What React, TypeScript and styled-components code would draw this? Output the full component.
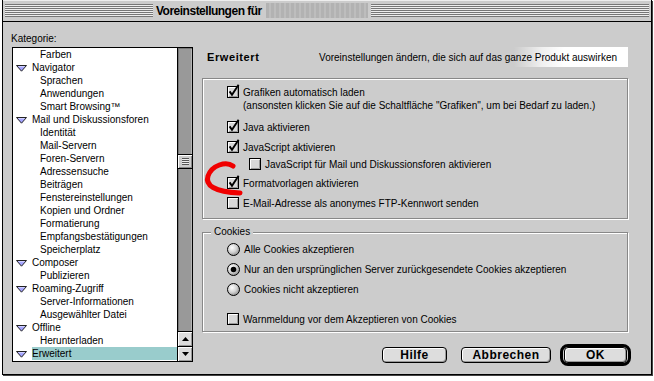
import React, { useId } from "react";
import styled, { createGlobalStyle } from "styled-components";

const GlobalStyle = createGlobalStyle`
  html, body { margin: 0; padding: 0; }
  body {
    width: 654px;
    height: 381px;
    overflow: hidden;
    background: #ffffff;
    font-family: "Liberation Sans", Arial, sans-serif;
    font-size: 10px;
    color: #000;
  }
  * { box-sizing: border-box; }
`;

const Screen = styled.div`
  padding-left: 2px;
  height: 381px;
`;

const Window = styled.div`
  width: 650px;
  height: 375px;
  background: #cccccc;
  border: 1px solid #000;
  border-top: none;
  box-shadow: 1px 1px 0 #444;
  display: flex;
  flex-direction: column;
`;

const TitleBar = styled.div`
  height: 22px;
  border-bottom: 1px solid #000;
  display: flex;
  align-items: center;
  padding: 0 2px;
  background: #cccccc;
  box-shadow: inset 0 1px 0 #eeeeee;
`;

const Stripes = styled.div<{ $w?: number }>`
  height: 13px;
  ${(p) => (p.$w ? `width: ${p.$w}px;` : "flex: 1;")}
  background: repeating-linear-gradient(to bottom, #777777 0 1px, #eeeeee 1px 2px);
`;

const TitleText = styled.div`
  font-family: "Liberation Sans", Arial, sans-serif;
  font-weight: bold;
  font-size: 12px;
  letter-spacing: -0.5px;
  padding: 0 4px 0 3px;
  line-height: 14px;
`;

const Redacted = styled.div`
  width: 102px;
  height: 15px;
  margin-right: 3px;
  background: repeating-linear-gradient(90deg, #b2b2b2 0 3px, #bdbdbd 3px 5px);
`;

const Body = styled.div`
  flex: 1;
  display: flex;
  padding-left: 9px;
`;

const LeftCol = styled.div`
  width: 181px;
  display: flex;
  flex-direction: column;
  padding-top: 11px;
`;

const Label = styled.div`
  height: 12px;
  line-height: 12px;
  margin-left: -1px;
  margin-bottom: 2px;
`;

const ListBox = styled.div`
  width: 181px;
  height: 315px;
  border: 1px solid #000;
  background: #fff;
  display: flex;
`;

const Rows = styled.div`
  width: 164px;
  display: flex;
  flex-direction: column;
`;

const Row = styled.div<{ $child?: boolean }>`
  height: 13px;
  display: flex;
  align-items: center;
  padding-left: ${(p) => (p.$child ? 27 : 3)}px;
  gap: 5px;
`;

const RowLabel = styled.span<{ $selected?: boolean }>`
  flex: 1;
  height: 13px;
  line-height: 13px;
  white-space: nowrap;
  background: ${(p) => (p.$selected ? "#99cccc" : "transparent")};
`;

const TriSvg = styled.svg`
  flex-shrink: 0;
  margin-top: 2px;
`;

const ScrollBar = styled.div`
  width: 15px;
  border-left: 1px solid #000;
  display: flex;
  flex-direction: column;
`;

const Track = styled.div`
  flex: 1;
  background: #999999;
  box-shadow: inset 1px 1px 0 #777777, inset -1px 0 0 #b5b5b5;
`;

const Thumb = styled.div<{ $top: number }>`
  margin-top: ${(p) => p.$top}px;
  height: 15px;
  background: #cccccc;
  border-top: 1px solid #000;
  border-bottom: 1px solid #000;
  box-shadow: inset 1px 1px 0 #ffffff, inset -1px -1px 0 #888888;
  display: flex;
  align-items: center;
  justify-content: center;
`;

const Grip = styled.div`
  width: 7px;
  height: 7px;
  background: repeating-linear-gradient(to bottom, #555555 0 1px, #eeeeee 1px 2px);
`;

const Arrow = styled.div`
  height: 15px;
  border-top: 1px solid #000;
  background: #dddddd;
  box-shadow: inset 1px 1px 0 #ffffff, inset -1px -1px 0 #999999;
  display: flex;
  align-items: center;
  justify-content: center;
`;

const RightCol = styled.div`
  width: 426px;
  margin-left: 9px;
  display: flex;
  flex-direction: column;
  padding-top: 25px;
`;

const HeaderRow = styled.div`
  height: 20px;
  display: flex;
  align-items: center;
  justify-content: space-between;
  padding: 0 11px 0 5px;
  background: linear-gradient(90deg, rgba(255,255,255,0) 0 312px, rgba(255,255,255,0.7) 340px, #ffffff 362px);
`;

const HeaderTitle = styled.span`
  font-weight: bold;
  font-size: 11px;
  letter-spacing: 0.6px;
`;

const HeaderDesc = styled.span`
  white-space: nowrap;
`;

const Group = styled.div<{ $mt: number; $h: number; $pt: number }>`
  position: relative;
  margin-top: ${(p) => p.$mt}px;
  height: ${(p) => p.$h}px;
  border: 1px solid #888888;
  box-shadow: 1px 1px 0 #ffffff, inset 1px 1px 0 #ffffff;
  padding: ${(p) => p.$pt}px 0 0 24px;
  display: flex;
  flex-direction: column;
`;

const GroupLegend = styled.span`
  position: absolute;
  left: 8px;
  top: -8px;
  padding: 0 3px;
  background: #cccccc;
  line-height: 14px;
`;

const Option = styled.div<{ $mt?: number; $indent?: number }>`
  height: 14px;
  display: flex;
  align-items: center;
  gap: 4px;
  margin-top: ${(p) => p.$mt ?? 0}px;
  margin-left: ${(p) => p.$indent ?? 0}px;
  white-space: nowrap;
`;

const ContLine = styled.div`
  height: 14px;
  line-height: 14px;
  padding-left: 16px;
  white-space: nowrap;
`;

const CtlSvg = styled.svg`
  flex-shrink: 0;
  overflow: visible;
`;

const Annotation = styled.svg`
  position: absolute;
  left: -1px;
  top: -1px;
  overflow: visible;
  pointer-events: none;
`;

const ButtonRow = styled.div`
  margin-top: 12px;
  margin-right: -3px;
  display: flex;
  justify-content: flex-end;
  align-items: center;
  gap: 9px;
`;

const PushButton = styled.div<{ $w: number; $mr?: number }>`
  width: ${(p) => p.$w}px;
  height: 16px;
  margin-right: ${(p) => p.$mr ?? 0}px;
  border: 1px solid #000;
  border-radius: 4px;
  background: #dddddd;
  box-shadow: inset 1px 1px 0 #ffffff, inset -1px -1px 0 #999999;
  display: flex;
  align-items: center;
  justify-content: center;
  font-weight: bold;
  font-size: 12px;
  letter-spacing: 0.5px;
  line-height: 14px;
`;

const DefaultRing = styled.div`
  border: 3px solid #000;
  border-radius: 8px;
  padding: 0 1px;
  display: flex;
`;

const Triangle = () => (
  <TriSvg width="11" height="7" viewBox="0 0 11 7">
    <path d="M0.5 0.5 H10.5 L5.5 6.2 Z" fill="#a4a4ff" stroke="#222" strokeWidth="1" strokeLinejoin="round" />
    <path d="M2.5 1.6 H8.5" stroke="#d4d4ff" strokeWidth="1" />
  </TriSvg>
);

const CheckBox = ({ checked }: { checked?: boolean }) => (
  <CtlSvg width="12" height="12" viewBox="0 0 12 12">
    <rect x="0.5" y="0.5" width="11" height="11" fill="#d8d8d8" stroke="#000" />
    <path d="M1.5 10.5 V1.5 H10.5" stroke="#ffffff" fill="none" />
    <path d="M2 10.5 H10.5 V2" stroke="#999999" fill="none" />
    {checked && (
      <path d="M2.6 5.4 L5 8.8 L11.6 -1.2" stroke="#000" strokeWidth="1.9" fill="none" />
    )}
  </CtlSvg>
);

const Radio = ({ on }: { on?: boolean }) => {
  const id = useId();
  return (
    <CtlSvg width="13" height="13" viewBox="0 0 13 13">
      <defs>
        <radialGradient id={id} cx="0.38" cy="0.35" r="0.7">
          <stop offset="0" stopColor="#ffffff" />
          <stop offset="0.55" stopColor="#d2d2d2" />
          <stop offset="1" stopColor="#8a8a8a" />
        </radialGradient>
      </defs>
      <circle cx="6.5" cy="6.5" r="6" fill={`url(#${id})`} stroke="#000" />
      {on && <circle cx="6.5" cy="6.5" r="2.8" fill="#000" />}
    </CtlSvg>
  );
};

const UpArrow = () => (
  <svg width="7" height="4" viewBox="0 0 7 4"><path d="M3.5 0 L7 4 H0 Z" fill="#000" /></svg>
);
const DownArrow = () => (
  <svg width="7" height="4" viewBox="0 0 7 4"><path d="M0 0 H7 L3.5 4 Z" fill="#000" /></svg>
);

type Item = { label: string; cat?: boolean; selected?: boolean };
const items: Item[] = [
  { label: "Farben" },
  { label: "Navigator", cat: true },
  { label: "Sprachen" },
  { label: "Anwendungen" },
  { label: "Smart Browsing™" },
  { label: "Mail und Diskussionsforen", cat: true },
  { label: "Identität" },
  { label: "Mail-Servern" },
  { label: "Foren-Servern" },
  { label: "Adressensuche" },
  { label: "Beiträgen" },
  { label: "Fenstereinstellungen" },
  { label: "Kopien und Ordner" },
  { label: "Formatierung" },
  { label: "Empfangsbestätigungen" },
  { label: "Speicherplatz" },
  { label: "Composer", cat: true },
  { label: "Publizieren" },
  { label: "Roaming-Zugriff", cat: true },
  { label: "Server-Informationen" },
  { label: "Ausgewählter Datei" },
  { label: "Offline", cat: true },
  { label: "Herunterladen" },
  { label: "Erweitert", cat: true, selected: true },
];

export default function App() {
  return (
    <>
      <GlobalStyle />
      <Screen>
        <Window>
          <TitleBar>
            <Stripes $w={148} />
            <TitleText>Voreinstellungen für</TitleText>
            <Redacted />
            <Stripes />
          </TitleBar>
          <Body>
            <LeftCol>
              <Label>Kategorie:</Label>
              <ListBox>
                <Rows>
                  {items.map((it) => (
                    <Row key={it.label} $child={!it.cat}>
                      {it.cat && <Triangle />}
                      <RowLabel $selected={it.selected}>{it.label}</RowLabel>
                    </Row>
                  ))}
                </Rows>
                <ScrollBar>
                  <Track>
                    <Thumb $top={106}>
                      <Grip />
                    </Thumb>
                  </Track>
                  <Arrow><UpArrow /></Arrow>
                  <Arrow><DownArrow /></Arrow>
                </ScrollBar>
              </ListBox>
            </LeftCol>
            <RightCol>
              <HeaderRow>
                <HeaderTitle>Erweitert</HeaderTitle>
                <HeaderDesc>Voreinstellungen ändern, die sich auf das ganze Produkt auswirken</HeaderDesc>
              </HeaderRow>
              <Group $mt={11} $h={141} $pt={6}>
                <Option><CheckBox checked />Grafiken automatisch laden</Option>
                <ContLine>(ansonsten klicken Sie auf die Schaltfläche "Grafiken", um bei Bedarf zu laden.)</ContLine>
                <Option $mt={7}><CheckBox checked />Java aktivieren</Option>
                <Option $mt={6}><CheckBox checked />JavaScript aktivieren</Option>
                <Option $mt={3} $indent={22}><CheckBox />JavaScript für Mail und Diskussionsforen aktivieren</Option>
                <Option $mt={5}><CheckBox checked />Formatvorlagen aktivieren</Option>
                <Option $mt={6}><CheckBox />E-Mail-Adresse als anonymes FTP-Kennwort senden</Option>
                <Annotation width="40" height="40">
                  <path
                    d="M31 88 C 24 83, 10 87, 6 98 C 3 107, 12 114, 38 115"
                    stroke="#f00000"
                    strokeWidth="5"
                    fill="none"
                    strokeLinecap="round"
                  />
                </Annotation>
              </Group>
              <Group $mt={13} $h={100} $pt={9}>
                <GroupLegend>Cookies</GroupLegend>
                <Option><Radio />Alle Cookies akzeptieren</Option>
                <Option $mt={6}><Radio on />Nur an den ursprünglichen Server zurückgesendete Cookies akzeptieren</Option>
                <Option $mt={6}><Radio />Cookies nicht akzeptieren</Option>
                <Option $mt={16}><CheckBox />Warnmeldung vor dem Akzeptieren von Cookies</Option>
              </Group>
              <ButtonRow>
                <PushButton $w={65} $mr={5}>Hilfe</PushButton>
                <PushButton $w={90}>Abbrechen</PushButton>
                <DefaultRing>
                  <PushButton $w={63}>OK</PushButton>
                </DefaultRing>
              </ButtonRow>
            </RightCol>
          </Body>
        </Window>
      </Screen>
    </>
  );
}
